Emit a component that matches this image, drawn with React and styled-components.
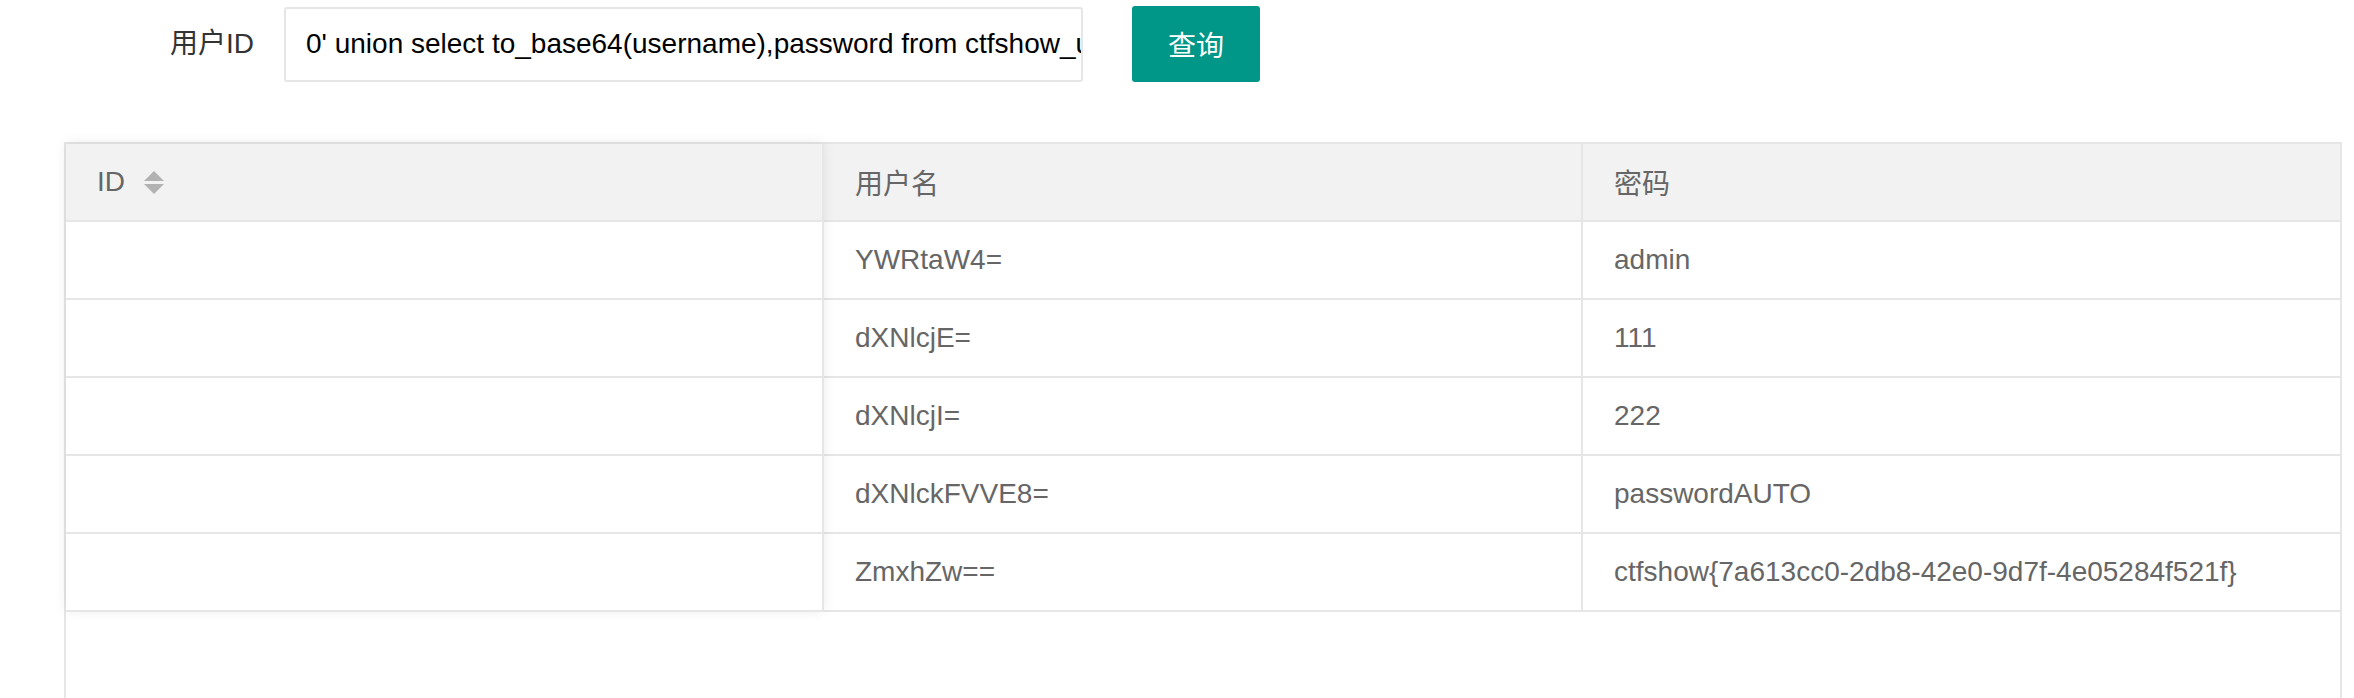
import React from "react";
import styled, { createGlobalStyle } from "styled-components";

const Global = createGlobalStyle`
  html, body {
    margin: 0;
    padding: 0;
    background: #fff;
    overflow: hidden;
  }
  body {
    font-family: "Liberation Sans", Arial, "Noto Sans CJK SC", sans-serif;
    font-size: 28px;
    color: #333;
  }
`;

const Page = styled.div`
  width: 2354px;
  height: 698px;
  overflow: hidden;
`;

const Form = styled.form`
  display: flex;
  align-items: center;
  height: 76px;
  margin-top: 6px;
`;

const Label = styled.label`
  width: 254px;
  text-align: right;
  font-size: 28px;
  color: #333;
  line-height: 1;
`;

const Input = styled.input`
  box-sizing: border-box;
  width: 799px;
  height: 75px;
  margin-left: 30px;
  padding: 0 0 0 20px;
  border: 2px solid #e6e6e6;
  border-radius: 3px;
  font-family: "Liberation Sans", Arial, "Noto Sans CJK SC", sans-serif;
  font-size: 28px;
  color: #000;
  background: #fff;
  outline: none;
`;

const Button = styled.button`
  box-sizing: border-box;
  width: 128px;
  height: 76px;
  margin-left: 49px;
  padding: 0;
  border: none;
  border-radius: 3px;
  background: #009688;
  color: #fff;
  font-family: "Liberation Sans", Arial, "Noto Sans CJK SC", sans-serif;
  font-size: 28px;
  cursor: pointer;
`;

const Table = styled.div`
  display: flex;
  box-sizing: border-box;
  margin: 60px 12px 0 64px;
  height: 620px;
  border: 2px solid #e6e6e6;
  color: #666;
  font-size: 28px;
`;

const FixedPane = styled.div`
  position: relative;
  z-index: 1;
  width: 758px;
  flex: none;
  align-self: flex-start;
  background: #fff;
  box-shadow: 0 -1px 12px rgba(0, 0, 0, 0.08);
`;

const MainPane = styled.div`
  flex: 1;
  display: grid;
  grid-template-columns: 759px 1fr;
  align-content: start;
`;

const HeadCell = styled.div`
  box-sizing: border-box;
  height: 78px;
  display: flex;
  align-items: center;
  gap: 19px;
  padding-left: 31px;
  background: #f2f2f2;
  border-bottom: 2px solid #e6e6e6;
  border-right: ${(p) => (p.$last ? "none" : "2px solid #e6e6e6")};
  color: #666;
`;

const Cell = styled.div`
  box-sizing: border-box;
  height: 78px;
  display: flex;
  align-items: center;
  padding-left: 31px;
  border-bottom: 2px solid #e6e6e6;
  border-right: ${(p) => (p.$last ? "none" : "2px solid #e6e6e6")};
  color: #666;
  white-space: nowrap;
`;

const SortIcon = () => (
  <svg width="20" height="23" viewBox="0 0 20 23" aria-hidden="true">
    <polygon points="10,0 20,10 0,10" fill="#b2b2b2" />
    <polygon points="0,13 20,13 10,23" fill="#b2b2b2" />
  </svg>
);

const rows = [
  ["YWRtaW4=", "admin"],
  ["dXNlcjE=", "111"],
  ["dXNlcjI=", "222"],
  ["dXNlckFVVE8=", "passwordAUTO"],
  ["ZmxhZw==", "ctfshow{7a613cc0-2db8-42e0-9d7f-4e05284f521f}"],
];

export default function App() {
  return (
    <Page>
      <Global />
      <Form onSubmit={(e) => e.preventDefault()}>
        <Label>用户ID</Label>
        <Input
          type="text"
          defaultValue="0' union select to_base64(username),password from ctfshow_user4 --+"
          readOnly
        />
        <Button type="submit">查询</Button>
      </Form>
      <Table>
        <FixedPane>
          <HeadCell>
            <span>ID</span>
            <SortIcon />
          </HeadCell>
          {rows.map((r, i) => (
            <Cell key={i} />
          ))}
        </FixedPane>
        <MainPane>
          <HeadCell>用户名</HeadCell>
          <HeadCell $last>密码</HeadCell>
          {rows.map((r, i) => (
            <React.Fragment key={i}>
              <Cell>{r[0]}</Cell>
              <Cell $last>{r[1]}</Cell>
            </React.Fragment>
          ))}
        </MainPane>
      </Table>
    </Page>
  );
}
